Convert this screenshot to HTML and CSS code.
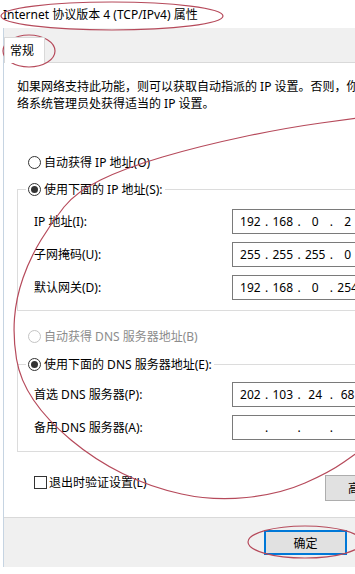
FILE: index.html
```html
<!DOCTYPE html>
<html>
<head>
    <title>Internet 协议版本 4 (TCP/IPv4) 属性</title>
    <link rel="stylesheet" href="styles.css">
</head>
<body>
    <div class="titlebar">Internet 协议版本 4 (TCP/IPv4) 属性</div>

    <div class="frame">
        <div class="tabs">
            <div class="tab">常规</div>
        </div>

        <div class="panel">
            <p class="intro">如果网络支持此功能，则可以获取自动指派的 IP 设置。否则，你需要从网<br>络系统管理员处获得适当的 IP 设置。</p>

            <div class="option first"><span class="radio"></span>自动获得 IP 地址(O)</div>
            <fieldset class="group">
                <legend class="option"><span class="radio checked"></span>使用下面的 IP 地址(S):</legend>
                <div class="fields">
                    <div class="field">
                        <span>IP 地址(I):</span>
                        <div class="ip"><span>192</span><i>.</i><span>168</span><i>.</i><span>0</span><i>.</i><span>2</span></div>
                    </div>
                    <div class="field">
                        <span>子网掩码(U):</span>
                        <div class="ip"><span>255</span><i>.</i><span>255</span><i>.</i><span>255</span><i>.</i><span>0</span></div>
                    </div>
                    <div class="field">
                        <span>默认网关(D):</span>
                        <div class="ip"><span>192</span><i>.</i><span>168</span><i>.</i><span>0</span><i>.</i><span>254</span></div>
                    </div>
                </div>
            </fieldset>

            <div class="option disabled dns-auto"><span class="radio"></span>自动获得 DNS 服务器地址(B)</div>
            <fieldset class="group dns">
                <legend class="option"><span class="radio checked"></span>使用下面的 DNS 服务器地址(E):</legend>
                <div class="fields">
                    <div class="field">
                        <span>首选 DNS 服务器(P):</span>
                        <div class="ip"><span>202</span><i>.</i><span>103</span><i>.</i><span>24</span><i>.</i><span>68</span></div>
                    </div>
                    <div class="field">
                        <span>备用 DNS 服务器(A):</span>
                        <div class="ip"><span></span><i>.</i><span></span><i>.</i><span></span><i>.</i><span></span></div>
                    </div>
                </div>
            </fieldset>

            <div class="bottom-row">
                <label class="check"><span class="box"></span>退出时验证设置(L)</label>
                <button class="btn advanced">高级(V)...</button>
            </div>
        </div>

        <div class="footer">
            <button class="btn default">确定</button>
            <button class="btn">取消</button>
        </div>
    </div>

    <!-- red hand-drawn marks over the dialog -->
    <svg class="marks" width="355" height="574" viewBox="0 0 355 574">
        <ellipse cx="112" cy="16" rx="111" ry="14"/>
        <ellipse cx="29" cy="51" rx="26" ry="16"/>
        <ellipse cx="305" cy="542" rx="57" ry="16"/>
        <path d="M357 118 L321 123 Q285 128 242.5 137 Q200 146 162.5 157 Q125 168 100.5 180 Q76 192 64 207 Q52 222 41 240 Q30 258 23 278 Q16 298 14.5 318 Q13 338 16.5 359 Q20 380 33.5 400 Q47 420 71 440 Q95 460 122.5 473.5 Q150 487 181.5 494 Q213 501 246.5 497.5 Q280 494 305 483 Q330 472 344 462 L358 452"/>
    </svg>
</body>
</html>
```

FILE: styles.css
```css
body {
    margin: 0;
    width: 355px;
    height: 574px;
    overflow: hidden;
    position: relative;
    background-color: #fff;
    font-family: "Noto Sans", "Noto Sans CJK SC", sans-serif;
    font-size: 12px;
    line-height: 17px;
    color: #000;
}

.titlebar {
    height: 28px;
    line-height: 30px;
    padding-left: 3px;
    white-space: nowrap;
}

.frame {
    margin-left: 3px;
    width: 440px;
    border-left: 1px solid #c6d4e2;
    background-color: #f0f0f0;
}

.tabs {
    display: flex;
    align-items: flex-start;
    height: 34px;
    padding-top: 9px;
    box-sizing: border-box;
}

.tab {
    position: relative;
    z-index: 1;
    height: 26px;
    box-sizing: border-box;
    padding: 0 10px 0 5px;
    line-height: 25px;
    background-color: #fff;
    border: 1px solid #d9d9d9;
    border-bottom: none;
}

.panel {
    background-color: #fff;
    border-top: 1px solid #d9d9d9;
    border-bottom: 1px solid #d9d9d9;
    padding: 15px 25px 16px 13px;
}

.intro {
    margin: 0;
    white-space: nowrap;
}

.option {
    display: flex;
    align-items: center;
    height: 17px;
    white-space: nowrap;
}

.option.first {
    margin-top: 42px;
    padding-left: 11px;
}

.option.dns-auto {
    margin-top: 17px;
    padding-left: 11px;
}

.option.disabled {
    color: #8c8c8c;
}

.radio {
    width: 13px;
    height: 13px;
    box-sizing: border-box;
    margin-right: 3px;
    border: 1px solid #333;
    border-radius: 50%;
    background-color: #fff;
    display: flex;
    align-items: center;
    justify-content: center;
}

.radio.checked::after {
    content: "";
    width: 7px;
    height: 7px;
    border-radius: 50%;
    background-color: #333;
}

.disabled .radio {
    border-color: #c4c4c4;
}

.group {
    margin: 10px 0 0 0;
    padding: 11px 0 10px 16px;
    border: 1px solid #dcdcdc;
    min-width: 0;
}

.group.dns {
    margin-top: 11px;
    padding-top: 9px;
    padding-bottom: 11px;
}

.group legend {
    padding: 0 2px;
    margin-left: -8px;
}

.fields {
    display: grid;
    row-gap: 8px;
}

.field {
    display: grid;
    grid-template-columns: 198px 130px;
    align-items: center;
    white-space: nowrap;
}

.ip {
    display: flex;
    align-items: center;
    height: 25px;
    box-sizing: border-box;
    padding-left: 4px;
    border: 1px solid #7a7a7a;
    background-color: #fff;
    font-family: "Noto Sans", sans-serif;
}

.ip span {
    width: 28px;
    text-align: center;
}

.ip i {
    width: 6px;
    text-align: center;
    font-style: normal;
}

.bottom-row {
    display: flex;
    justify-content: space-between;
    align-items: flex-start;
    margin-top: 23px;
}

.check {
    display: flex;
    align-items: center;
    height: 14px;
    padding-left: 17px;
    white-space: nowrap;
}

.box {
    width: 13px;
    height: 13px;
    box-sizing: border-box;
    margin-right: 2px;
    border: 1px solid #333;
    background-color: #fff;
}

.btn {
    font-family: inherit;
    font-size: 12px;
    color: #000;
    background-color: #e1e1e1;
    border: 1px solid #adadad;
    padding: 0;
    width: 83px;
    height: 25px;
    white-space: nowrap;
}

.btn.advanced {
    width: 94px;
    height: 26px;
}

.btn.default {
    border: 2px solid #0078d7;
}

.footer {
    display: flex;
    gap: 8px;
    height: 49px;
    box-sizing: border-box;
    padding: 12px 0 0 260px;
}

.marks {
    position: absolute;
    top: 0;
    left: 0;
    pointer-events: none;
}

.marks ellipse,
.marks path {
    fill: none;
    stroke: #b64a5b;
    stroke-width: 1.2;
}
```
